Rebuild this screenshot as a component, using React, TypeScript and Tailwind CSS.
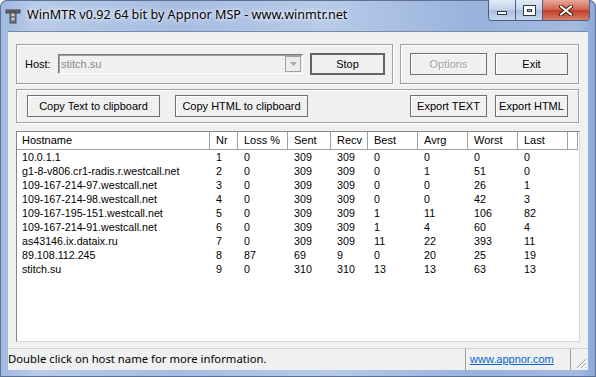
import React from 'react';

const rows = [
  ['10.0.1.1', '1', '0', '309', '309', '0', '0', '0', '0'],
  ['g1-8-v806.cr1-radis.r.westcall.net', '2', '0', '309', '309', '0', '1', '51', '0'],
  ['109-167-214-97.westcall.net', '3', '0', '309', '309', '0', '0', '26', '1'],
  ['109-167-214-98.westcall.net', '4', '0', '309', '309', '0', '0', '42', '3'],
  ['109-167-195-151.westcall.net', '5', '0', '309', '309', '1', '11', '106', '82'],
  ['109-167-214-91.westcall.net', '6', '0', '309', '309', '1', '4', '60', '4'],
  ['as43146.ix.dataix.ru', '7', '0', '309', '309', '11', '22', '393', '11'],
  ['89.108.112.245', '8', '87', '69', '9', '0', '20', '25', '19'],
  ['stitch.su', '9', '0', '310', '310', '13', '13', '63', '13'],
];

const headers = ['Hostname', 'Nr', 'Loss %', 'Sent', 'Recv', 'Best', 'Avrg', 'Worst', 'Last'];

const cols = 'grid-cols-[193px_28px_50px_43px_37px_50px_50px_50px_50px_1fr]';

function Btn({
  children,
  w,
  disabled,
  def,
}: {
  children: React.ReactNode;
  w: string;
  disabled?: boolean;
  def?: boolean;
}) {
  return (
    <div
      className={`${w} h-[22px] flex items-center justify-center bg-[#f0f0f0] ${
        def
          ? 'border-2 border-[#646464]'
          : 'border border-[#707070] shadow-[inset_1px_1px_0_#fff]'
      } ${disabled ? 'text-[#a0a0a0] [text-shadow:1px_1px_0_#fff]' : 'text-black'}`}
    >
      {children}
    </div>
  );
}

function AppIcon() {
  return (
    <svg width="16" height="16" viewBox="0 0 16 16">
      <rect x="1" y="2" width="14" height="3" fill="#6b6b6b" stroke="#333" strokeWidth="0.8" />
      <rect x="5" y="4" width="6" height="11" fill="#7d7d7d" stroke="#333" strokeWidth="0.8" />
      <rect x="6.5" y="6" width="3" height="2" fill="#cfcfcf" />
      <rect x="6.5" y="10" width="3" height="2" fill="#cfcfcf" />
    </svg>
  );
}

export default function App() {
  return (
    <div className="w-[596px] h-[377px] overflow-hidden bg-white font-['Liberation_Sans',Arial,sans-serif] text-[11px] text-black">
      <div className="w-full h-full rounded-t-[7px] bg-[linear-gradient(90deg,#9fb8e0_0%,#b8cbe8_6%,#a6bde2_30%,#b7cae8_55%,#98b2dc_80%,#a4bbe0_97%,#8aa6d6_100%)] shadow-[inset_0_0_0_1px_#5c7396] flex flex-col">
        {/* Title bar */}
        <div className="h-[31px] flex items-start shrink-0">
          <div className="flex items-center h-[31px] pl-[5px] gap-[6px]">
            <AppIcon />
            <span className="font-['Noto_Sans',sans-serif] text-[12.6px] [text-shadow:0_0_6px_#fff,0_0_3px_#fff]">
              WinMTR v0.92 64 bit by Appnor MSP - www.winmtr.net
            </span>
          </div>
          <div className="ml-auto mr-[6px] flex h-[21px] rounded-b-[4px] border border-t-0 border-[#4b5f7e] overflow-hidden">
            <div className="w-[27px] h-full flex items-center justify-center border-r border-[#4b5f7e] bg-[linear-gradient(180deg,#e2eaf6_0%,#c3d3ea_50%,#a9bfe0_51%,#c6d6ee_100%)]">
              <div className="w-[10px] h-[4px] mt-[5px] bg-white border border-[#2f3a4c]" />
            </div>
            <div className="w-[27px] h-full flex items-center justify-center border-r border-[#4b5f7e] bg-[linear-gradient(180deg,#e2eaf6_0%,#c3d3ea_50%,#a9bfe0_51%,#c6d6ee_100%)]">
              <div className="w-[11px] h-[9px] border-[3px] border-white outline outline-1 outline-[#2f3a4c] shadow-[inset_0_0_0_1px_#2f3a4c]" />
            </div>
            <div className="w-[46px] h-full flex items-center justify-center bg-[linear-gradient(180deg,#e9a99a_0%,#d0614c_50%,#c23a24_51%,#d8806b_100%)]">
              <svg width="14" height="11" viewBox="0 0 14 11">
                <path d="M2 1.5 L12 9.5 M12 1.5 L2 9.5" stroke="#3a1a14" strokeWidth="4" strokeLinecap="round" />
                <path d="M2 1.5 L12 9.5 M12 1.5 L2 9.5" stroke="#fff" strokeWidth="2.2" strokeLinecap="round" />
              </svg>
            </div>
          </div>
        </div>

        {/* Client area */}
        <div className="mx-[8px] h-[339px] bg-[#f0f0f0] border-t border-[#7a8aa5] flex flex-col shrink-0">
          <div className="px-[8px] pt-[12px] flex flex-col">
            {/* Row 1 */}
            <div className="flex gap-[7px]">
              <div className="w-[377px] h-[40px] border border-[#a0a0a0] shadow-[inset_1px_1px_0_#fff,1px_1px_0_#fff] flex items-center pl-[8px]">
                <span className="w-[33px]">Host:</span>
                <div className="w-[245px] h-[20px] bg-[#f0f0f0] border border-[#7a7a7a] border-r-white border-b-white shadow-[inset_1px_1px_0_#a0a0a0] flex items-center">
                  <span className="pl-[2px] text-[#8a8a8a] flex-1">stitch.su</span>
                  <div className="w-[16px] h-[16px] mr-[1px] border border-[#a0a0a0] bg-[#ededed] flex items-center justify-center">
                    <svg width="7" height="4" viewBox="0 0 7 4">
                      <path d="M0 0 H7 L3.5 4 Z" fill="#a8a8a8" />
                    </svg>
                  </div>
                </div>
                <div className="ml-[7px]">
                  <Btn w="w-[75px]" def>
                    Stop
                  </Btn>
                </div>
              </div>
              <div className="w-[179px] h-[40px] border border-[#a0a0a0] shadow-[inset_1px_1px_0_#fff,1px_1px_0_#fff] flex items-center pl-[9px] gap-[8px]">
                <Btn w="w-[77px]" disabled>
                  Options
                </Btn>
                <Btn w="w-[73px]">Exit</Btn>
              </div>
            </div>

            {/* Row 2 */}
            <div className="mt-[5px] w-[563px] h-[34px] border border-[#a0a0a0] shadow-[inset_1px_1px_0_#fff,1px_1px_0_#fff] flex items-center pl-[10px]">
              <Btn w="w-[133px]">Copy Text to clipboard</Btn>
              <div className="ml-[15px]">
                <Btn w="w-[133px]">Copy HTML to clipboard</Btn>
              </div>
              <div className="ml-auto mr-[10px] flex gap-[8px]">
                <Btn w="w-[77px]">Export TEXT</Btn>
                <Btn w="w-[73px]">Export HTML</Btn>
              </div>
            </div>

            {/* Table */}
            <div className="mt-[8px] w-[564px] h-[211px] bg-white border border-[#828790] border-r-[#d8d8d8] border-b-[#d8d8d8] flex flex-col">
              <div className={`grid ${cols} h-[17px] shrink-0`}>
                {headers.map((h, i) => (
                  <div
                    key={h}
                    className={`flex items-center border-r border-b border-[#a0a0a0] bg-white ${
                      i === 0 ? 'pl-[5px]' : 'pl-[6px]'
                    }`}
                  >
                    {h}
                  </div>
                ))}
                <div className="border-r border-b border-[#a0a0a0] bg-white mr-[1px]" />
              </div>
              <div className="pt-[1px] text-[10.7px]">
                {rows.map((r) => (
                  <div key={r[1]} className={`grid ${cols} h-[14px] leading-[14px]`}>
                    {r.map((c, i) => (
                      <div key={i} className={i === 0 ? 'pl-[5px] whitespace-nowrap' : 'pl-[6px]'}>
                        {c}
                      </div>
                    ))}
                    <div />
                  </div>
                ))}
              </div>
            </div>
          </div>

          {/* Status bar */}
          <div className="mt-auto h-[22px] flex items-stretch border-t border-[#d0d0d0] font-['Noto_Sans',sans-serif] text-[11.3px]">
            <div className="flex-1 flex items-center border-r border-[#a0a0a0]">
              Double click on host name for more information.
            </div>
            <div className="w-[105px] flex items-center pl-[4px] border-r border-[#a0a0a0] font-['Liberation_Sans',Arial,sans-serif] text-[11px]">
              <span className="text-[#0066cc] underline">www.appnor.com</span>
            </div>
            <div className="w-[17px] flex items-end justify-end pb-[1px] pr-[1px]">
              <svg width="12" height="12" viewBox="0 0 12 12">
                <path d="M11 2 L2 11 M11 6 L6 11 M11 10 L10 11" stroke="#a0a0a0" strokeWidth="1" />
                <path d="M12 3 L3 12 M12 7 L7 12" stroke="#fff" strokeWidth="1" />
              </svg>
            </div>
          </div>
        </div>
      </div>
    </div>
  );
}
